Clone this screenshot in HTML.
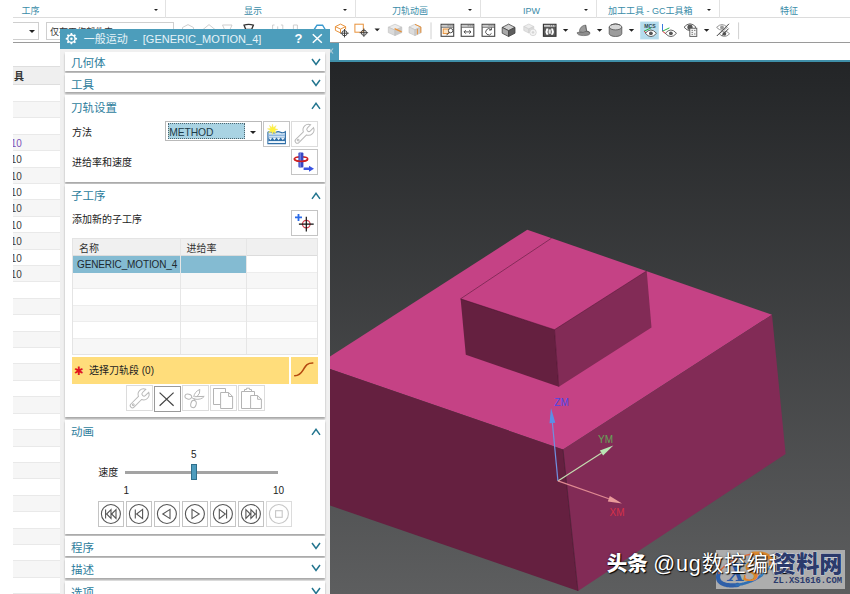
<!DOCTYPE html>
<html lang="zh-CN">
<head>
<meta charset="utf-8">
<title>一般运动 - [GENERIC_MOTION_4]</title>
<style>
*{box-sizing:border-box;margin:0;padding:0}
html,body{width:850px;height:594px;overflow:hidden;background:#fff}
body{position:relative;font-family:"Liberation Sans","Noto Sans CJK SC",sans-serif;font-size:10px;color:#222}
.abs{position:absolute}
.t{position:absolute;white-space:nowrap;line-height:14px;height:14px}
/* ribbon */
#rib1{position:absolute;left:13px;top:0;width:837px;height:18px;background:#fff;border-bottom:1px solid #dcdcdc}
#rib1 .lbl{position:absolute;top:4px;font-size:9px;line-height:14px;color:#3a8ca8;white-space:nowrap}
#rib1 .sep{position:absolute;top:0;width:1px;height:18px;background:#e2e2e2}
.dd{position:absolute;width:0;height:0;border-left:2.6px solid transparent;border-right:2.6px solid transparent;border-top:2.8px solid #222}
#rib2{position:absolute;left:13px;top:19px;width:837px;height:24px;background:#fff;border-bottom:1.5px solid #9a9a9a;overflow:hidden}
.cb{position:absolute;top:3px;height:18px;border:1px solid #cfcfcf;background:#fff}
.vsep{position:absolute;width:1px;background:#d0d0d0}
/* left panel */
#lp{position:absolute;left:13px;top:43px;width:47px;height:551px;background:#fff;overflow:hidden}
#lp .hd{position:absolute;left:0;top:23px;width:47px;height:19px;background:#efefef;border-top:1px solid #dedede;border-bottom:1px solid #dedede}
#lp .row{position:absolute;left:0;width:47px;height:16.41px;border-bottom:1px solid #e9e9e9}
#lp .row.a{background:#f6f6f6}
#lp .n{position:absolute;left:-2.2px;top:2px;font-size:10px;line-height:14px;color:#3c3c3c}
/* viewport */
#vp{position:absolute;left:330px;top:62px;width:520px;height:532px;background:linear-gradient(#232527,#5d5e5f)}
/* dialog */
#dlg{position:absolute;left:60px;top:29px;width:270px;height:565px;background:#f0f0f0}
#ttl{position:absolute;left:0;top:0;width:270px;height:20px;background:#4c9dbb}
.grp{position:absolute;left:5px;width:260px;background:#fff;box-shadow:0 1.5px 1.8px rgba(0,0,0,.30)}
.gt{position:absolute;left:6px;top:4.6px;font-size:11.5px;line-height:14px;color:#2d7d9c;white-space:nowrap}
.chev{position:absolute;left:246px;width:10px;height:8px}
.lb{position:absolute;font-size:10px;line-height:14px;white-space:nowrap;color:#222}
.btn{position:absolute;width:26.4px;height:26.2px;border:1px solid #c4c4c4;background:#fff}
.btn.dis{border-color:#dcdcdc}
.btn svg{position:absolute;left:0;top:0}
</style>
</head>
<body>

<!-- ===== ribbon row 1 ===== -->
<div id="rib1">
  <span class="lbl" style="left:8.5px">工序</span>
  <i class="dd" style="left:141px;top:9px"></i>
  <i class="sep" style="left:152px"></i>
  <span class="lbl" style="left:231px">显示</span>
  <i class="dd" style="left:330px;top:9px"></i>
  <i class="sep" style="left:342px"></i>
  <span class="lbl" style="left:379px">刀轨动画</span>
  <i class="dd" style="left:455px;top:9px"></i>
  <i class="sep" style="left:467px"></i>
  <span class="lbl" style="left:510px">IPW</span>
  <i class="dd" style="left:571px;top:9px"></i>
  <i class="sep" style="left:583px"></i>
  <span class="lbl" style="left:595px">加工工具 - GC工具箱</span>
  <i class="dd" style="left:694px;top:9px"></i>
  <i class="sep" style="left:706px"></i>
  <span class="lbl" style="left:767px">特征</span>
</div>

<!-- ===== toolbar row 2 ===== -->
<div id="rib2">
  <div class="cb" style="left:-10px;width:36px"></div>
  <i class="dd" style="left:15.5px;top:11px;border-left-width:3.5px;border-right-width:3.5px;border-top-width:3.5px"></i>
  <div class="cb" style="left:33px;width:128px"><span class="t" style="left:3px;top:2.2px;font-size:9px;color:#333">仅在工作部件内</span></div>
  <svg id="tbicons" class="abs" style="left:0;top:0" width="837" height="24" viewBox="13 19 837 24"><g fill="none" stroke="#cfcfcf" stroke-width="1"><path d="M182.5,29.5 V27.5 L188,24.6 L193.5,27.5 V29.5"/><path d="M203,29.5 L209,24.6 L215,29.5"/><path d="M222.5,25 H232 L230,29.5 H224.5 Z"/><path d="M272.6,29.5 V25 H274.5 M282.8,29.5 V25 H280.9 M277.7,26.4 V29.5"/><path d="M293.4,25 h4 v4.5 h-4 z"/></g><path d="M244,25.1 Q248.6,23.6 253.4,25.1 L251.6,29.5 H245.8 Z" fill="none" stroke="#333" stroke-width="1.3"/><path d="M314.2,29.5 L317,25.2 H322.6 L325.2,29.5" fill="none" stroke="#3a9ad0" stroke-width="1.4"/><g fill="none" stroke="#e8923a" stroke-width="1"><path d="M335.4,26.6 L340.5,24.1 L345.6,26.6 L340.5,29.1 Z M335.4,26.6 V30.4 L340.5,32.9 V29.1 M345.6,26.6 V29.4"/></g><g fill="none" stroke="#333" stroke-width="0.9"><circle cx="344.5" cy="33.2" r="2.6"/><path d="M340.3,33.2 h8.4 M344.5,29.000000000000004 v8.4"/></g><rect x="354.9" y="24.2" width="8.4" height="8" fill="none" stroke="#e8923a" stroke-width="1"/><g fill="none" stroke="#333" stroke-width="0.9"><circle cx="363.9" cy="32.7" r="2.6"/><path d="M359.7,32.7 h8.4 M363.9,28.500000000000004 v8.4"/></g><path d="M374.5,28.5 h5.4 l-2.7,2.8 z" fill="#222"/><g stroke="#bdbdbd" stroke-width="0.6"><path d="M388.3,27.2 L395,24.2 L401.8,27.2 L395,30.2 Z" fill="#ececec"/><path d="M388.3,27.2 L395,30.2 V35.6 L388.3,32.6 Z" fill="#dadada"/><path d="M401.8,27.2 L395,30.2 V35.6 L401.8,32.6 Z" fill="#c9c9c9"/></g><path d="M394.6,28.6 L401.6,31.8" stroke="#e8923a" stroke-width="1.4" fill="none"/><g stroke="#bdbdbd" stroke-width="0.6"><path d="M409,27 L415,24.2 L421,27 L415,29.8 Z" fill="#ececec"/><path d="M409,27 L415,29.8 V35.6 L409,32.8 Z" fill="#dcdcdc"/><path d="M421,27 L415,29.8 V35.6 L421,32.8 Z" fill="#cdcdcd"/></g><path d="M415,24.4 L420.8,27 V32.8 M417.4,28.8 V34.4" stroke="#e8923a" stroke-width="1" fill="none"/><path d="M431,22.4 V39.2" stroke="#d0d0d0" stroke-width="1"/><g><rect x="441.1" y="24.3" width="12.6" height="12" fill="#fff" stroke="#444" stroke-width="1.1"/><rect x="441.7" y="24.9" width="11.4" height="1.9" fill="#c9c9c9"/><path d="M441.1,27.3 h12.6" stroke="#555" stroke-width="0.8"/><path d="M447.6,25.8 h1 m1,0 h1 m1,0 h1" stroke="#555" stroke-width="0.8"/></g><rect x="443.2" y="29" width="5.6" height="4.6" fill="#fbe3c4" stroke="#e8923a" stroke-width="1"/><circle cx="450.6" cy="30.6" r="2.2" fill="#fff" stroke="#444" stroke-width="0.9"/><path d="M449,32.4 L446.6,35.2" stroke="#444" stroke-width="1"/><g><rect x="461.2" y="24.3" width="12.6" height="12" fill="#fff" stroke="#444" stroke-width="1.1"/><rect x="461.8" y="24.9" width="11.4" height="1.9" fill="#c9c9c9"/><path d="M461.2,27.3 h12.6" stroke="#555" stroke-width="0.8"/><path d="M467.7,25.8 h1 m1,0 h1 m1,0 h1" stroke="#555" stroke-width="0.8"/></g><path d="M464,31.9 h7 M465.8,30.1 L464,31.9 L465.8,33.7 M469.2,30.1 L471,31.9 L469.2,33.7" fill="none" stroke="#444" stroke-width="0.9"/><g><rect x="482.1" y="24.3" width="12.6" height="12" fill="#fff" stroke="#444" stroke-width="1.1"/><rect x="482.7" y="24.9" width="11.4" height="1.9" fill="#c9c9c9"/><path d="M482.1,27.3 h12.6" stroke="#555" stroke-width="0.8"/><path d="M488.6,25.8 h1 m1,0 h1 m1,0 h1" stroke="#555" stroke-width="0.8"/></g><path d="M491,29.6 A3.1,3.1 0 1 0 491.5,33.4 M491.4,27.6 V30 H489" fill="none" stroke="#444" stroke-width="0.9"/><g stroke="#444" stroke-width="0.8" stroke-linejoin="round"><path d="M502.2,27.4 L508.6,24.1 L515,27.4 L508.6,30.7 Z" fill="#cfcfcf"/><path d="M502.2,27.4 L508.6,30.7 V36.5 L502.2,33.2 Z" fill="#a9a9a9"/><path d="M515,27.4 L508.6,30.7 V36.5 L515,33.2 Z" fill="#5e5e5e"/></g><g stroke="#cfcfcf" stroke-width="0.7" stroke-linejoin="round"><path d="M523.8,26.5 L528.8,24 L533.8,26.5 L528.8,29 Z" fill="#ededed"/><path d="M523.8,26.5 L528.8,29 V33 L523.8,30.5 Z" fill="#e2e2e2"/><path d="M533.8,26.5 L528.8,29 V33 L533.8,30.5 Z" fill="#d9d9d9"/><circle cx="533" cy="32.4" r="3.3" fill="#f4f4f4"/><circle cx="533" cy="32.4" r="0.9" fill="#ddd"/></g><rect x="543.4" y="24.3" width="12.6" height="12" fill="#5a5a5a" stroke="#333" stroke-width="1.1"/><rect x="544" y="24.9" width="11.4" height="1.9" fill="#c9c9c9"/><path d="M550,25.8 h1 m1,0 h1 m1,0 h1" stroke="#555" stroke-width="0.8"/><path d="M546.4,28.4 Q544.6,31.6 546.4,34.8 H548.4 Q546.8,31.6 548.4,28.4 Z M553,28.4 Q554.8,31.6 553,34.8 H551 Q552.6,31.6 551,28.4 Z" fill="#fff"/><rect x="548.6" y="29.4" width="2.2" height="4.4" fill="#e8e8e8"/><path d="M562.9,28.9 h5.4 l-2.7,2.8 z" fill="#222"/><g stroke="#555" stroke-width="0.6"><path d="M577.2,32.6 Q577,35.6 583.6,35.6 Q590,35.6 590,33 Q590,31.4 586.6,31 L577.2,32.6 Z" fill="#8e8e8e"/><path d="M579.4,31.6 Q579.6,26 585.6,25 L586.6,31.2 Q583,33.4 579.4,31.6 Z" fill="#9b9b9b"/><path d="M585.6,25 L586.8,31.2 L589.8,32.6" fill="none"/></g><path d="M596.9,28.9 h5.4 l-2.7,2.8 z" fill="#222"/><g stroke="#555" stroke-width="0.8"><path d="M609.2,27 V33.6 A6.3,2.9 0 0 0 621.8,33.6 V27" fill="#9c9c9c"/><ellipse cx="615.5" cy="27" rx="6.3" ry="2.9" fill="#d6d6d6"/><path d="M611,24.9 L615.5,23.7 L620,24.9" fill="none"/></g><path d="M628.8,28.9 h5.4 l-2.7,2.8 z" fill="#222"/><rect x="640.2" y="21.6" width="18.6" height="17.8" fill="#b5dced"/><text x="644.2" y="27.8" font-family="Liberation Sans, sans-serif" font-size="5.2" font-weight="bold" fill="#2a4450" textLength="11.4" lengthAdjust="spacingAndGlyphs">MCS</text><path d="M644,31.2 L651,27.9" stroke="#2eb84a" stroke-width="1"/><path d="M644,31.2 L647,33.8" stroke="#d83030" stroke-width="1"/><path d="M645.3,33.3 Q650.9,26.7 656.5,33.3 Q650.9,39.9 645.3,33.3 Z" fill="#fff" stroke="#555" stroke-width="0.9"/><circle cx="650.9" cy="33.3" r="1.9" fill="#555"/><path d="M662.5,24 V31.2" stroke="#3a7ae0" stroke-width="1"/><path d="M662.5,31.2 L669.4,27.9" stroke="#2eb84a" stroke-width="1"/><path d="M662.5,31.2 L665.8,33.8" stroke="#d83030" stroke-width="1"/><path d="M665.3,33.3 Q670.9,26.7 676.5,33.3 Q670.9,39.9 665.3,33.3 Z" fill="#fff" stroke="#555" stroke-width="0.9"/><circle cx="670.9" cy="33.3" r="1.9" fill="#555"/><path d="M684.0,27.2 Q690.0,20.4 696.0,27.2 Q690.0,34.0 684.0,27.2 Z" fill="#fff" stroke="#555" stroke-width="0.9"/><circle cx="690.0" cy="27.2" r="1.9" fill="#555"/><circle cx="690" cy="27.2" r="2.6" fill="#555"/><rect x="689.8" y="28.2" width="7" height="8.2" fill="#f4f4f4" stroke="#555" stroke-width="0.9"/><path d="M691.6,30.4 h1.2 m1.4,0 h1.2 M691.6,32.4 h1.2 m1.4,1.6 h1.2 M691.6,34.4 h1.2" stroke="#555" stroke-width="0.9"/><path d="M703.9,28.9 h5.4 l-2.7,2.8 z" fill="#222"/><path d="M716.6,27.4 Q722.0,21.8 727.4,27.4 Q722.0,33.0 716.6,27.4 Z" fill="#fff" stroke="#888" stroke-width="0.9"/><circle cx="722.0" cy="27.4" r="1.9" fill="#999"/><path d="M719.2,33.8 Q724.4,28.4 729.6,33.8 Q724.4,39.2 719.2,33.8 Z" fill="#fff" stroke="#888" stroke-width="0.9"/><circle cx="724.4" cy="33.8" r="1.9" fill="#555"/><path d="M729,23.8 L716.8,36 M728.6,28.6 L721.6,36" stroke="#444" stroke-width="1" fill="none"/><path d="M738.6,22.4 V39.2" stroke="#d0d0d0" stroke-width="1"/></svg>
</div>

<!-- ===== left panel ===== -->
<div id="lp">
  <div class="hd"><span class="t" style="left:1px;top:3.2px;font-size:10px;font-weight:bold;color:#333">具</span></div>
  <div class="row" style="top:42.50px"></div>
  <div class="row a" style="top:58.91px"></div>
  <div class="row" style="top:75.32px"></div>
  <div class="row a" style="top:91.73px"><span class="n" style="color:#7a52b8">10</span></div>
  <div class="row" style="top:108.14px"><span class="n">10</span></div>
  <div class="row a" style="top:124.55px"><span class="n">10</span></div>
  <div class="row" style="top:140.96px"><span class="n">10</span></div>
  <div class="row a" style="top:157.37px"><span class="n">10</span></div>
  <div class="row" style="top:173.78px"><span class="n">10</span></div>
  <div class="row a" style="top:190.19px"><span class="n">10</span></div>
  <div class="row" style="top:206.60px"><span class="n">10</span></div>
  <div class="row a" style="top:223.01px"><span class="n">10</span></div>
  <div class="row" style="top:239.42px"></div>
  <div class="row a" style="top:255.83px"></div>
  <div class="row" style="top:272.24px"></div>
  <div class="row a" style="top:288.65px"></div>
  <div class="row" style="top:305.06px"></div>
  <div class="row a" style="top:321.47px"></div>
  <div class="row" style="top:337.88px"></div>
  <div class="row a" style="top:354.29px"></div>
  <div class="row" style="top:370.70px"></div>
  <div class="row a" style="top:387.11px"></div>
  <div class="row" style="top:403.52px"></div>
  <div class="row a" style="top:419.93px"></div>
  <div class="row" style="top:436.34px"></div>
  <div class="row a" style="top:452.75px"></div>
  <div class="row" style="top:469.16px"></div>
  <div class="row a" style="top:485.57px"></div>
  <div class="row" style="top:501.98px"></div>
  <div class="row a" style="top:518.39px"></div>
  <div class="row" style="top:534.80px"></div>
  <div class="row a" style="top:551.21px"></div>
</div>

<!-- ===== tab strip + viewport ===== -->
<div class="abs" style="left:330px;top:43px;width:9px;height:18px;background:#4c9dbb;overflow:hidden"><svg class="abs" style="left:0;top:0" width="9" height="18"><path d="M-1,5.5 L3,10.5 M3,5.5 L-1,10.5" stroke="#a9cad6" stroke-width="1.2"/></svg></div>
<div class="abs" style="left:330px;top:60px;width:520px;height:2px;background:#3f8fa9"></div>
<div id="vp">
<svg width="520" height="532" viewBox="330 62 520 532" style="position:absolute;left:0;top:0">
  <!-- base block -->
  <polygon points="330,356.6 527.3,229.7 772,314.7 563,449.4 330,369" fill="#c54285"/>
  <polygon points="330,369 563,449.4 578,591 330,505.5" fill="#652040"/>
  <polygon points="563,449.4 772,314.7 785.6,454 578,591" fill="#822b56"/>
  <!-- boss -->
  <polygon points="460.6,298.8 554.5,329.7 558.8,386.7 465.8,354.8" fill="#652040"/>
  <polygon points="554.5,329.7 646.7,270.9 651.5,327.6 558.8,386.7" fill="#822b56"/>
  <g fill="none" stroke="#3a1226" stroke-width="0.6" stroke-opacity="0.75">
    <path d="M551.5,238.2 460.6,298.8 554.5,329.7 646.7,270.9"/>
    <path d="M554.5,329.7 558.8,386.7"/>
    <path d="M563,449.4 578,591"/>
  </g>
  <path d="M557.9,480.9 L552.4,422.9" stroke="#6f8fe0" stroke-width="1.2" fill="none"/><path d="M551.0,408.0 L555.3,422.7 L549.5,423.2 Z" fill="#5b8fe6"/><path d="M557.9,480.9 L601.5,453.0" stroke="#c4dcb0" stroke-width="1.2" fill="none"/><path d="M613.3,445.5 L603.1,455.6 L599.9,450.5 Z" fill="#b9e6b4"/><path d="M557.9,480.9 L608.8,498.8" stroke="#e08a92" stroke-width="1.2" fill="none"/><path d="M622.0,503.4 L607.8,501.6 L609.8,495.9 Z" fill="#e99a9a"/><g font-family="Liberation Sans, sans-serif" font-size="10"><text x="554.3" y="405.6" fill="#4a48e8">ZM</text><text x="598" y="442.5" fill="#66a456">YM</text><text x="609.5" y="515.5" fill="#d63048">XM</text></g>
</svg>
</div>

<!-- ===== dialog ===== -->
<div id="dlg">
  <div id="ttl">
    <svg class="abs" style="left:0;top:0" width="270" height="20" viewBox="0 0 270 20"><path d="M10.69,4.04 L12.11,4.04 L12.53,5.55 L13.53,5.96 L14.89,5.20 L15.90,6.21 L15.14,7.57 L15.55,8.57 L17.06,8.99 L17.06,10.41 L15.55,10.83 L15.14,11.83 L15.90,13.19 L14.89,14.20 L13.53,13.44 L12.53,13.85 L12.11,15.36 L10.69,15.36 L10.27,13.85 L9.27,13.44 L7.91,14.20 L6.90,13.19 L7.66,11.83 L7.25,10.83 L5.74,10.41 L5.74,8.99 L7.25,8.57 L7.66,7.57 L6.90,6.21 L7.91,5.20 L9.27,5.96 L10.27,5.55 Z" fill="#fff"/><circle cx="11.4" cy="9.7" r="2.1" fill="none" stroke="#4c9dbb" stroke-width="1.7"/>
<path d="M252.8,5.2 L261.8,13.8 M261.8,5.2 L252.8,13.8" stroke="#fff" stroke-width="1.5" fill="none"/></svg>
    <span class="t" id="ttxt" style="left:23.8px;top:3.2px;font-size:11px;word-spacing:2.6px;color:#e6f3f8">一般运动 - [GENERIC_MOTION_4]</span>
    <span class="t" style="left:234.6px;top:2.8px;font-size:13px;font-weight:bold;color:#fff">?</span>
  </div>
  <div class="grp" style="top:22.7px;height:19.0px"><span class="gt">几何体</span><svg class="chev" style="top:6px" viewBox="0 0 10 8"><path d="M1,1 L5,6.5 L9,1" fill="none" stroke="#23758f" stroke-width="1.5"/></svg></div>
  <div class="grp" style="top:44.1px;height:19.0px"><span class="gt">工具</span><svg class="chev" style="top:6px" viewBox="0 0 10 8"><path d="M1,1 L5,6.5 L9,1" fill="none" stroke="#23758f" stroke-width="1.5"/></svg></div>
  <div class="grp" style="top:65.6px;height:87.0px"><span class="gt" style="top:6px">刀轨设置</span><svg class="chev" style="top:7px" viewBox="0 0 10 8"><path d="M1,6.9 L5,1.4 L9,6.9" fill="none" stroke="#23758f" stroke-width="1.5"/></svg>
    <div class="abs" style="left:0;top:1.4px">
    <span class="lb" style="left:7px;top:29.8px">方法</span>
    <div class="abs" style="left:100px;top:25px;width:97px;height:20.5px;border:1px solid #b9b9b9;background:#fff">
      <div class="abs" style="left:1.8px;top:1.3px;width:77px;height:16px;background:#a9d3e3;border:1px dotted #4d6670"></div>
      <span class="lb" style="left:3.3px;top:3.6px;font-size:10.3px;letter-spacing:-0.1px;color:#1c3a48">METHOD</span>
      <i class="dd" style="left:84.2px;top:8.6px;border-left-width:3.5px;border-right-width:3.5px;border-top-width:3.6px"></i>
    </div>
    <div class="btn" style="left:198.4px;top:25.3px" id="b_method"><svg width="26" height="26" viewBox="0 0 26 26" style="position:absolute;left:-1px;top:-1px"><path d="M4.9,11.3 Q7,10 9,11.3 T13,11.3 T17.5,11.3 T22.4,10.6 L22.4,22.6 L4.9,22.6 Z" fill="#d3e6f6" stroke="#2f6ea6" stroke-width="1.1"/>
<rect x="5.5" y="13.6" width="16.4" height="1.5" fill="#8fb6de"/>
<rect x="5.5" y="16.4" width="16.4" height="3.6" fill="#2f6ea6"/>
<path d="M5.5,16.6 L7.4,19.2 L9.4,16.6 L11.4,19.2 L13.5,16.6 L15.6,19.2 L17.7,16.6 L19.8,19.2 L21.9,16.6 Z" fill="#eaf3fb"/>
<rect x="5.5" y="20.6" width="16.4" height="1.2" fill="#f4f9fd"/>
<path d="M9.5,3 L10.4,6.6 L13.2,4.6 L11.8,7.6 L15,8.4 L11.9,9.6 L13,12.4 L10.3,10.7 L9.3,13.5 L8.6,10.6 L5.4,11.8 L7.3,9.3 L4.4,7.8 L7.6,7.4 L6.4,4.4 L8.9,6.4 Z" fill="#fff23c" stroke="#f3e46a" stroke-width="0.4"/></svg></div>
    <div class="btn dis" style="left:226.4px;top:25.3px" id="b_wr1"><svg width="26" height="26" viewBox="0 0 26 26" style="position:absolute;left:-1px;top:-1px"><g transform="translate(17.5,8.8) rotate(45)" fill="none" stroke="#b9b9b9" stroke-width="1"><path d="M2.2,5.04 A5.5,5.5 0 0 0 2.1,-5.08 L2.1,-0.6 A2.1,2.1 0 0 1 -2.1,-0.6 L-2.1,-5.08 A5.5,5.5 0 0 0 -2.2,5.04 L-2.2,15.8 A2.2,2.2 0 0 0 2.2,15.8 Z"/><circle cx="0" cy="14.6" r="0.9"/></g></svg></div>
    <span class="lb" style="left:7px;top:60.1px">进给率和速度</span>
    <div class="btn" style="left:226.4px;top:53.3px" id="b_feed"><svg width="26" height="26" viewBox="0 0 26 26" style="position:absolute;left:-1px;top:-1px"><ellipse cx="10.1" cy="10.1" rx="6.6" ry="2.3" fill="none" stroke="#cf2020" stroke-width="1.6"/>
<rect x="7.4" y="3.4" width="5" height="15" rx="1" fill="#3848c4"/>
<rect x="8.6" y="3.6" width="1.2" height="14.6" fill="#8e98e6" opacity=".8"/>
<path d="M3.6,9.4 A6.6,2.3 0 0 0 16.6,10.6" fill="none" stroke="#cf2020" stroke-width="1.6"/>
<path d="M12.6,18.4 L18,18.4 L18,16.7 L23,19.7 L18,22.7 L18,21 L12.6,21 Z" fill="#3a54e2"/></svg></div>
    </div>
  </div>
  <div class="grp" style="top:155.4px;height:232.6px"><span class="gt">子工序</span><svg class="chev" style="top:7.5px" viewBox="0 0 10 8"><path d="M1,6.9 L5,1.4 L9,6.9" fill="none" stroke="#23758f" stroke-width="1.5"/></svg>
    <div class="abs" style="left:0;top:-0.4px">
    <span class="lb" style="left:7px;top:28.6px">添加新的子工序</span>
    <div class="btn" style="left:226.2px;top:26.3px" id="b_add"><svg width="26" height="26" viewBox="0 0 26 26" style="position:absolute;left:-1px;top:-1px"><path d="M4,7.4 H11 M7.5,3.9 V10.9" stroke="#2a6ae8" stroke-width="1.8" fill="none"/>
<circle cx="15.3" cy="14.1" r="3.8" fill="none" stroke="#d23c4c" stroke-width="1.2"/>
<path d="M7.9,14.1 H22.7 M15.3,6.8 V21.5" stroke="#111" stroke-width="1.2" fill="none"/></svg></div>
    <div class="abs" id="tbl" style="left:7px;top:53.5px;width:245.5px;height:117.5px;border:1px solid #e4e4e4;background:#fff;overflow:hidden">
      <div class="abs" style="left:0;top:0;width:245px;height:17.5px;background:#f0f0f0;border-bottom:1px solid #dcdcdc"></div>
      <div class="abs" style="left:0;top:17.5px;width:245px;height:16.5px;background:#fff;border-bottom:1px solid #ededed"></div>
      <div class="abs" style="left:0;top:34.0px;width:245px;height:16.5px;background:#f7f7f7;border-bottom:1px solid #ededed"></div>
      <div class="abs" style="left:0;top:50.5px;width:245px;height:16.5px;background:#fff;border-bottom:1px solid #ededed"></div>
      <div class="abs" style="left:0;top:67.0px;width:245px;height:16.5px;background:#f7f7f7;border-bottom:1px solid #ededed"></div>
      <div class="abs" style="left:0;top:83.5px;width:245px;height:16.5px;background:#fff;border-bottom:1px solid #ededed"></div>
      <div class="abs" style="left:0;top:100.0px;width:245px;height:16.5px;background:#f7f7f7;border-bottom:1px solid #ededed"></div>
      <div class="abs" style="left:0;top:17.5px;width:173.6px;height:16.5px;background:#84bbd2"></div>
      <div class="abs" style="left:107.2px;top:0;width:1px;height:117px;background:#e6e6e6"></div>
      <div class="abs" style="left:173.3px;top:0;width:1px;height:117px;background:#e6e6e6"></div>
      <span class="lb" style="left:6px;top:3.6px;color:#333">名称</span>
      <span class="lb" style="left:113.5px;top:3.8px;color:#333">进给率</span>
      <span class="lb" style="left:4px;top:19.6px;letter-spacing:-0.13px;color:#1e2a30">GENERIC_MOTION_4</span>
    </div>
    <div class="abs" style="left:7.3px;top:173.4px;width:216.7px;height:26.6px;background:#ffdd7b"></div>
    <div class="abs" style="left:226.4px;top:173.4px;width:26.6px;height:26.6px;background:#ffdd7b" id="b_curve"><svg width="26.6" height="26.6" viewBox="0 0 26.6 26.6" style="position:absolute;left:0;top:0"><path d="M3.7,18.8 C9.5,18.4 10.8,15 12.7,12 C14.8,8.5 16,6 21.8,6" fill="none" stroke="#b4480f" stroke-width="1.5" stroke-linecap="round"/></svg></div>
    <span class="lb" id="ast" style="left:9px;top:179.5px;font-family:'DejaVu Sans',sans-serif;font-size:11.5px;line-height:14px;font-weight:bold;color:#e0141e">✱</span>
    <span class="lb" style="left:24px;top:180px;color:#222">选择刀轨段 (0)</span>
    <div class="btn dis" style="left:61.3px;top:201px" id="b_wr2"><svg width="26" height="26" viewBox="0 0 26 26" style="position:absolute;left:-1px;top:-1px"><g transform="translate(17.6,9.4) rotate(45)" fill="none" stroke="#b9b9b9" stroke-width="1"><path d="M2.2,5.04 A5.5,5.5 0 0 0 2.1,-5.08 L2.1,-0.6 A2.1,2.1 0 0 1 -2.1,-0.6 L-2.1,-5.08 A5.5,5.5 0 0 0 -2.2,5.04 L-2.2,15.8 A2.2,2.2 0 0 0 2.2,15.8 Z"/><circle cx="0" cy="14.6" r="0.9"/></g></svg></div>
    <div class="btn" style="left:89.3px;top:201.5px;border-color:#9a9a9a" id="b_del"><svg width="26" height="26" viewBox="0 0 26 26" style="position:absolute;left:-1px;top:-1px"><path d="M5.6,6.6 L19.6,19.8 M19.6,6.6 L5.6,19.8" stroke="#444" stroke-width="1.2" fill="none"/></svg></div>
    <div class="btn dis" style="left:117.3px;top:201px" id="b_cut"><svg width="26" height="26" viewBox="0 0 26 26" style="position:absolute;left:-1px;top:-1px"><g fill="none" stroke="#b6b6b6" stroke-width="1"><ellipse cx="6.3" cy="11.6" rx="3.4" ry="2.5" transform="rotate(15 6.3 11.6)"/><ellipse cx="11.5" cy="19" rx="2.7" ry="3.7" transform="rotate(15 11.5 19)"/>
<path d="M11.8,12 Q12.2,7 17.8,4.4 Q18.6,8.2 14.8,12 M12.6,11.7 L22.2,11.4 Q19.2,15 13,14.2 M9.5,12.5 L12.6,14.2 M12,15.5 L12.8,13.2"/></g></svg></div>
    <div class="btn dis" style="left:145.3px;top:201px" id="b_copy"><svg width="26" height="26" viewBox="0 0 26 26" style="position:absolute;left:-1px;top:-1px"><g fill="#fff" stroke="#b4b4b4" stroke-width="1"><path d="M3.5,3.5 H15.5 V19.5 H3.5 Z"/><path d="M10.6,7.5 H18.6 L22.6,11.5 V23.5 H10.6 Z"/><path d="M18.6,7.5 V11.5 H22.6" fill="none"/></g></svg></div>
    <div class="btn dis" style="left:173.3px;top:201px" id="b_paste"><svg width="26" height="26" viewBox="0 0 26 26" style="position:absolute;left:-1px;top:-1px"><g fill="#fff" stroke="#b4b4b4" stroke-width="1"><path d="M3.5,6.5 H16.5 V23.5 H3.5 Z"/><path d="M6.5,6.5 V4.5 H8.5 V3.2 H11.5 V4.5 H13.5 V6.5 Z"/><path d="M12.6,10.5 H19.6 L23.4,14.3 V23.5 H12.6 Z"/><path d="M19.6,10.5 V14.3 H23.4" fill="none"/></g></svg></div>
    </div>
  </div>
  <div class="grp" style="top:391.4px;height:113.3px"><span class="gt">动画</span><svg class="chev" style="top:7.5px" viewBox="0 0 10 8"><path d="M1,6.9 L5,1.4 L9,6.9" fill="none" stroke="#23758f" stroke-width="1.5"/></svg>
    <div class="abs" style="left:0;top:-1.4px">
    <span class="lb" style="left:126px;top:28.5px">5</span>
    <span class="lb" style="left:33.2px;top:46.6px">速度</span>
    <div class="abs" style="left:59.7px;top:52.2px;width:153.7px;height:2.8px;background:#a3a3a3"></div>
    <div class="abs" style="left:125.6px;top:45.2px;width:6.6px;height:15.5px;background:#4e9cbd;border:1px solid #2f6f8c"></div>
    <span class="lb" style="left:58.5px;top:65.4px">1</span>
    <span class="lb" style="left:208px;top:65.4px">10</span>
    <div class="btn" style="left:32.9px;top:82px" id="b_p0"><svg width="26" height="26" viewBox="0 0 26 26" style="position:absolute;left:-1px;top:-1px"><g fill="none" stroke="#555" stroke-width="1.1"><circle cx="12.9" cy="13" r="9.5"/><path d="M7.6,8.6 V17.4 M13,8.6 L8.6,13 L13,17.4 Z M18,8.6 L13.6,13 L18,17.4 Z"/></g></svg></div>
    <div class="btn" style="left:60.9px;top:82px" id="b_p1"><svg width="26" height="26" viewBox="0 0 26 26" style="position:absolute;left:-1px;top:-1px"><g fill="none" stroke="#555" stroke-width="1.1"><circle cx="12.9" cy="13" r="9.5"/><path d="M9.3,8.4 V17.6 M16.6,8.4 L10.6,13 L16.6,17.6 Z"/></g></svg></div>
    <div class="btn" style="left:88.9px;top:82px" id="b_p2"><svg width="26" height="26" viewBox="0 0 26 26" style="position:absolute;left:-1px;top:-1px"><g fill="none" stroke="#555" stroke-width="1.1"><circle cx="12.9" cy="13" r="9.5"/><path d="M16,8.4 L8.8,13 L16,17.6 Z"/></g></svg></div>
    <div class="btn" style="left:116.9px;top:82px" id="b_p3"><svg width="26" height="26" viewBox="0 0 26 26" style="position:absolute;left:-1px;top:-1px"><g fill="none" stroke="#555" stroke-width="1.1"><circle cx="12.9" cy="13" r="9.5"/><path d="M10,8.4 L17.2,13 L10,17.6 Z"/></g></svg></div>
    <div class="btn" style="left:144.9px;top:82px" id="b_p4"><svg width="26" height="26" viewBox="0 0 26 26" style="position:absolute;left:-1px;top:-1px"><g fill="none" stroke="#555" stroke-width="1.1"><circle cx="12.9" cy="13" r="9.5"/><path d="M16.6,8.4 V17.6 M9.3,8.4 L15.3,13 L9.3,17.6 Z"/></g></svg></div>
    <div class="btn" style="left:172.9px;top:82px" id="b_p5"><svg width="26" height="26" viewBox="0 0 26 26" style="position:absolute;left:-1px;top:-1px"><g fill="none" stroke="#555" stroke-width="1.1"><circle cx="12.9" cy="13" r="9.5"/><path d="M18.3,8.6 V17.4 M7.9,8.6 L12.3,13 L7.9,17.4 Z M12.9,8.6 L17.3,13 L12.9,17.4 Z"/></g></svg></div>
    <div class="btn dis" style="left:200.9px;top:82px" id="b_p6"><svg width="26" height="26" viewBox="0 0 26 26" style="position:absolute;left:-1px;top:-1px"><g fill="none" stroke="#c6c6c6" stroke-width="1.1"><circle cx="12.9" cy="13" r="9.5"/><rect x="9.6" y="9.7" width="6.6" height="6.6"/></g></svg></div>
    </div>
  </div>
  <div class="grp" style="top:507.0px;height:19.5px"><span class="gt">程序</span><svg class="chev" style="top:6px" viewBox="0 0 10 8"><path d="M1,1 L5,6.5 L9,1" fill="none" stroke="#23758f" stroke-width="1.5"/></svg></div>
  <div class="grp" style="top:529.3px;height:19.7px"><span class="gt">描述</span><svg class="chev" style="top:6px" viewBox="0 0 10 8"><path d="M1,1 L5,6.5 L9,1" fill="none" stroke="#23758f" stroke-width="1.5"/></svg></div>
  <div class="grp" style="top:552.2px;height:20px"><span class="gt">选项</span><svg class="chev" style="top:6px" viewBox="0 0 10 8"><path d="M1,1 L5,6.5 L9,1" fill="none" stroke="#23758f" stroke-width="1.5"/></svg></div>
</div>


<!-- ===== watermarks ===== -->
<div class="abs" style="left:716px;top:550px;width:129px;height:38.5px;background:rgba(186,186,186,.86)"></div>
<svg class="abs" style="left:716px;top:549px" width="130" height="41" viewBox="716 549 130 41">
  <g transform="rotate(-21 744.6 569.5)" fill="none" stroke-linecap="round"><path d="M732.8,581.5 L731.1,581.1 L729.6,580.6 L728.0,580.1 L726.6,579.6 L725.2,579.0 L724.0,578.4 L722.8,577.8 L721.7,577.1 L720.7,576.3 L719.8,575.6 L719.0,574.8 L718.3,574.0 L717.7,573.2 L717.3,572.4 L716.9,571.5 L716.7,570.7 L716.6,569.8 L716.6,568.9 L716.8,568.1 L717.0,567.2 L717.4,566.4 L717.9,565.5 L718.5,564.7 L719.2,563.9" stroke="#2f5fa8" stroke-width="4.2"/><path d="M758.6,580.9 L757.6,581.2 L756.5,581.4 L755.4,581.7 L754.3,581.9 L753.2,582.1 L752.1,582.2 L750.9,582.4 L749.8,582.5 L748.6,582.6 L747.4,582.6 L746.3,582.7 L745.1,582.7 L743.9,582.7 L742.7,582.7 L741.6,582.6 L740.4,582.5 L739.2,582.5 L738.1,582.3 L736.9,582.2 L735.8,582.0 L734.7,581.8 L733.6,581.6 L732.5,581.4 L731.5,581.2" stroke="#2f6fb4" stroke-width="2.6"/><path d="M772.5,570.7 L772.4,571.2 L772.2,571.7 L772.0,572.3 L771.7,572.8 L771.4,573.3 L771.0,573.9 L770.6,574.4 L770.2,574.9 L769.7,575.4 L769.1,575.8 L768.6,576.3 L767.9,576.8 L767.3,577.2 L766.6,577.7 L765.9,578.1 L765.1,578.5 L764.3,578.9 L763.4,579.3 L762.6,579.6 L761.6,580.0 L760.7,580.3 L759.7,580.6 L758.8,580.9 L757.7,581.2" stroke="#3a86c4" stroke-width="1.5"/><path d="M757.7,557.8 L759.2,558.2 L760.5,558.6 L761.8,559.1 L763.1,559.6 L764.3,560.1 L765.4,560.7 L766.5,561.3 L767.4,561.9 L768.3,562.5 L769.2,563.2 L769.9,563.9 L770.6,564.6 L771.1,565.3 L771.6,566.0 L772.0,566.8 L772.3,567.5 L772.5,568.3 L772.6,569.0 L772.6,569.8 L772.5,570.6 L772.3,571.3 L772.1,572.1 L771.7,572.8 L771.2,573.6" stroke="#dc8a30" stroke-width="4.4"/><path d="M719.2,563.9 L720.1,563.1 L721.1,562.3 L722.2,561.6 L723.4,560.9 L724.7,560.2 L726.1,559.6 L727.6,559.0 L729.2,558.5 L730.9,558.0 L732.6,557.6 L734.4,557.2 L736.2,556.9 L738.0,556.7 L739.9,556.5 L741.9,556.4 L743.8,556.3 L745.7,556.3 L747.6,556.4 L749.6,556.5 L751.5,556.7 L753.3,557.0 L755.1,557.3 L756.9,557.6 L758.6,558.1" stroke="#dd6a3a" stroke-width="1.4"/></g>
  <text x="727.5" y="580.6" font-family="Liberation Serif, serif" font-style="italic" font-weight="bold" font-size="27" fill="#2c5aa6">X</text>
  <text x="743" y="580.8" font-family="Liberation Serif, serif" font-style="italic" font-weight="bold" font-size="30" fill="#e0862c">S</text>
  <circle cx="738.4" cy="556.2" r="2.2" fill="#2c5aa6"/>
</svg>
<div class="abs" id="wmt" style="left:606.8px;top:549px;height:30px;line-height:30px;font-size:20.5px;font-weight:900;color:#fff;white-space:nowrap;text-shadow:1px 1px 1px #000,0 0 2px rgba(0,0,0,.6)">头条</div>
<div class="abs" id="wmt2" style="left:653.2px;top:549px;height:30px;line-height:30px;font-size:21.5px;color:#fff;white-space:nowrap;text-shadow:1px 1px 1px #000,0 0 2px rgba(0,0,0,.6);letter-spacing:0.9px">@ug数控编程</div>
<svg class="abs" style="left:716px;top:549px" width="130" height="41" viewBox="716 549 130 41">
  <text x="773" y="572" font-family="Liberation Sans, Noto Sans CJK SC, sans-serif" font-weight="900" font-size="23" fill="#2b3a6c" stroke="#dfe3ee" stroke-width="0.7" paint-order="stroke" textLength="69.5" lengthAdjust="spacingAndGlyphs">资料网</text>
  <text x="773.2" y="583.4" font-family="Liberation Mono, monospace" font-weight="bold" font-size="8.8" fill="#2b3a6c" textLength="68.8" lengthAdjust="spacingAndGlyphs">ZL.XS1616.COM</text>
</svg>
</body>
</html>
